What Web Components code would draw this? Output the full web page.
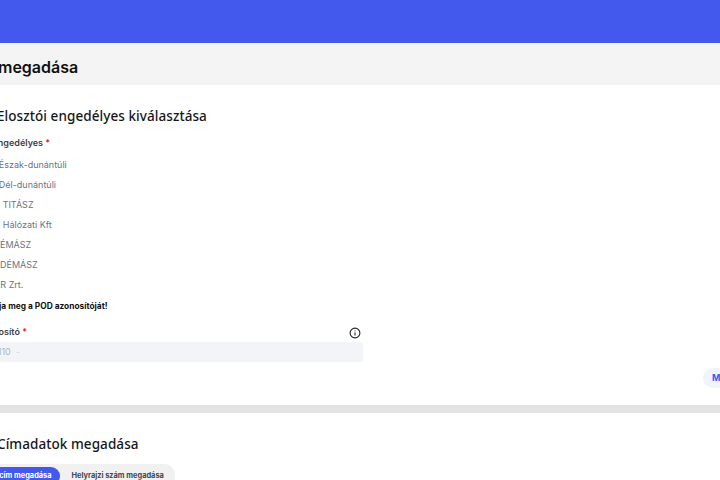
<!DOCTYPE html>
<html lang="hu">
<head>
<meta charset="utf-8">
<title>POD megadása</title>
<style>
  html, body { margin: 0; height: 480px; overflow: hidden; background: #fff; }
  body { font-family: Inter, "Liberation Sans", sans-serif; }
</style>
</head>
<body>
<app-page>
  <span slot="title">Mérőhely megadása</span>

  <form-section heading="Elosztói engedélyes kiválasztása">
    <radio-group label="Elosztói engedélyes">
      <radio-option>E.ON Észak-dunántúli</radio-option>
      <radio-option>E.ON Dél-dunántúli</radio-option>
      <radio-option>OPUS TITÁSZ</radio-option>
      <radio-option>ELMŰ Hálózati Kft</radio-option>
      <radio-option>MVM ÉMÁSZ</radio-option>
      <radio-option>MVM DÉMÁSZ</radio-option>
      <radio-option>MÁVER Zrt.</radio-option>
    </radio-group>
    <pod-field></pod-field>
    <pill-button>Mentés</pill-button>
  </form-section>

  <form-section heading="Címadatok megadása" last>
    <tab-switch></tab-switch>
  </form-section>
</app-page>

<script>
class AppPage extends HTMLElement {
    constructor() {
        super();
        this.attachShadow({ mode: 'open' }).innerHTML = `
            <style>
                :host { display: block; width: 720px; height: 480px; overflow: hidden; }
                .top { height: 43px; background: #4358ed; }
                .title {
                    height: 42px; box-sizing: border-box; padding-top: 6px; background: #f4f4f4;
                    display: flex; align-items: center; margin: 0;
                    font: 600 16px Inter, sans-serif; color: #111; white-space: nowrap;
                }
                ::slotted(span) { margin-left: -79px; }
            </style>
            <div class="top"></div>
            <h1 class="title"><slot name="title"></slot></h1>
            <slot></slot>
        `;
    }
}

class FormSection extends HTMLElement {
    constructor() {
        super();
        this.attachShadow({ mode: 'open' }).innerHTML = `
            <style>
                :host { display: block; background: #fff; }
                :host(:not([last])) { border-bottom: 8px solid #e3e3e3; height: 320px; }
                h2 {
                    margin: 0 0 0 -3px; padding: 21px 0 0; height: 21px;
                    font: 500 13.5px/21px "Noto Sans", sans-serif; color: #16161a;
                    white-space: nowrap; letter-spacing: 0.07px;
                }
            </style>
            <h2></h2>
            <slot></slot>
        `;
        this.shadowRoot.querySelector('h2').textContent = this.getAttribute('heading');
    }
}

class RadioGroup extends HTMLElement {
    constructor() {
        super();
        this.attachShadow({ mode: 'open' }).innerHTML = `
            <style>
                :host { display: block; margin: 9px 0 0 -44px; }
                .label { font: 600 9px/14px Inter, sans-serif; color: #3b3f4a; height: 14px; white-space: nowrap; }
                .label b { color: #e5252a; font-weight: 600; }
                .list { display: flex; flex-direction: column; margin-top: 5px; }
            </style>
            <div class="label"><span></span> <b>*</b></div>
            <div class="list"><slot></slot></div>
        `;
        this.shadowRoot.querySelector('.label span').textContent = this.getAttribute('label');
    }
}

class RadioOption extends HTMLElement {
    constructor() {
        super();
        this.attachShadow({ mode: 'open' }).innerHTML = `
            <style>
                :host {
                    display: flex; align-items: center; gap: 9px; height: 20px; white-space: nowrap;
                    font: 400 9px/20px Inter, sans-serif; color: #6d7382;
                }
                i { width: 10px; height: 10px; flex: none; border-radius: 50%; border: 1px solid #c8ccd6; box-sizing: border-box; }
            </style>
            <i></i><slot></slot>
        `;
    }
}

class PodField extends HTMLElement {
    constructor() {
        super();
        this.attachShadow({ mode: 'open' }).innerHTML = `
            <style>
                :host { display: block; margin: 4px 0 0 -44px; width: 407px; }
                .hint { font: 700 8.35px/14px Inter, sans-serif; color: #111; white-space: nowrap; padding-left: 2px; }
                .head { display: flex; justify-content: space-between; align-items: flex-start; margin-top: 12px; height: 16px; }
                .label { font: 600 9px/14px Inter, sans-serif; color: #3b3f4a; white-space: nowrap; }
                .label b { color: #e5252a; font-weight: 600; }
                svg { display: block; margin: 2px 2px 0 0; }
                .input {
                    height: 20px; margin-top: 1px; background: #f3f4f8; border-radius: 3px;
                    font: 400 9px/20px Inter, sans-serif; color: #b0b4bd; white-space: nowrap;
                }
                .input span { margin-left: 5px; color: #d4d7dd; }
            </style>
            <div class="hint">Kérjük, adja meg a POD azonosítóját!</div>
            <div class="head">
                <div class="label">POD azonosító <b>*</b></div>
                <svg width="12" height="12" viewBox="0 0 12 12" fill="none" stroke="#222" stroke-width="1.1">
                    <circle cx="6" cy="6" r="4.9"/>
                    <path d="M6 5.4v3M6 3.4v.9"/>
                </svg>
            </div>
            <div class="input">HU00000110<span>-</span></div>
        `;
    }
}

class PillButton extends HTMLElement {
    constructor() {
        super();
        this.attachShadow({ mode: 'open' }).innerHTML = `
            <style>
                :host { display: flex; margin: 6px 0 0 703px; width: 80px; }
                button {
                    border: 0; height: 20px; padding: 0 9px; border-radius: 10px; background: #f2f4fd;
                    font: 700 9px/20px Inter, sans-serif; color: #4358ed; white-space: nowrap;
                }
            </style>
            <button type="button"><slot></slot></button>
        `;
    }
}

class TabSwitch extends HTMLElement {
    constructor() {
        super();
        this.attachShadow({ mode: 'open' }).innerHTML = `
            <style>
                :host {
                    display: flex; width: fit-content; margin: 9px 0 0 -37px; padding: 3px 11px 3px 3px;
                    border-radius: 11px; background: #f1f1f1;
                }
                span { font: 700 7.4px/18px Inter, sans-serif; height: 18px; white-space: nowrap; border-radius: 9px; }
                .on { background: #4358ed; color: #fff; padding: 0 8px 0 9px; }
                .off { color: #454852; margin-left: 12px; }
            </style>
            <span class="on">Postai cím megadása</span>
            <span class="off">Helyrajzi szám megadása</span>
        `;
    }
}

customElements.define('app-page', AppPage);
customElements.define('form-section', FormSection);
customElements.define('radio-group', RadioGroup);
customElements.define('radio-option', RadioOption);
customElements.define('pod-field', PodField);
customElements.define('pill-button', PillButton);
customElements.define('tab-switch', TabSwitch);
</script>
</body>
</html>
